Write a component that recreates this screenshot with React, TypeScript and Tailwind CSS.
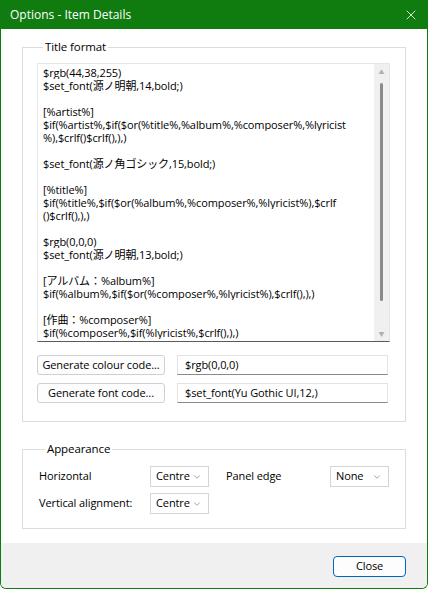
import { X, ChevronDown } from 'lucide-react';

const FONT = '[font-family:"Open_Sans","Noto_Sans_CJK_JP",sans-serif]';

const scriptLines = [
  '$rgb(44,38,255)',
  '$set_font(源ノ明朝,14,bold;)',
  '',
  '[%artist%]',
  '$if(%artist%,$if($or(%title%,%album%,%composer%,%lyricist',
  '%),$crlf()$crlf(),),)',
  '',
  '$set_font(源ノ角ゴシック,15,bold;)',
  '',
  '[%title%]',
  '$if(%title%,$if($or(%album%,%composer%,%lyricist%),$crlf',
  '()$crlf(),),)',
  '',
  '$rgb(0,0,0)',
  '$set_font(源ノ明朝,13,bold;)',
  '',
  '[アルバム：%album%]',
  '$if(%album%,$if($or(%composer%,%lyricist%),$crlf(),),)',
  '',
  '[作曲：%composer%]',
  '$if(%composer%,$if(%lyricist%,$crlf(),),)',
];

function Select({ value }: { value: string }) {
  return (
    <div className="w-[59px] h-[21px] border border-[#d5d5d5] bg-white flex items-center justify-between pl-[5px] pr-[6px]">
      <span>{value}</span>
      <ChevronDown className="w-[10px] h-[10px] text-[#6b6b6b]" strokeWidth={1.5} />
    </div>
  );
}

function ActionRow({ label, value }: { label: string; value: string }) {
  return (
    <div className="flex items-center gap-[12px] h-[20px]">
      <button className="w-[128px] h-[20px] bg-[#fdfdfd] border border-[#d0d0d0] rounded-[3px] flex items-center justify-center whitespace-nowrap">
        {label}
      </button>
      <div className="w-[211px] h-[20px] border border-[#e3e3e3] border-b-[#8a8a8a] bg-white flex items-center pl-[7px]">
        {value}
      </div>
    </div>
  );
}

export default function App() {
  return (
    <div className={`w-[428px] h-[589px] flex flex-col border border-t-0 border-[#107c10] rounded-b-[6px] overflow-hidden text-[11px] tracking-[-0.1px] text-black ${FONT}`}>
      {/* Title bar */}
      <div className="h-[29px] shrink-0 bg-[#107c10] flex items-center justify-between pl-[9px] pr-[8px] text-white">
        <span className="text-[12px] tracking-normal">Options - Item Details</span>
        <X className="w-[16px] h-[16px]" strokeWidth={1.25} />
      </div>

      {/* Body */}
      <div className="flex-1 bg-white px-[21px] pt-[10px]">
        <fieldset className="border border-[#dcdcdc] px-[14px] pb-[18px]">
          <legend className="ml-[6px] px-[2px] leading-[16px] text-[11.5px]">Title format</legend>
          <div className="mt-[8px] w-[353px] h-[279px] border border-[#e6e6e6] border-b-[#5a5a5a] flex">
            <div className="flex-1 pl-[5px] pt-[2px] overflow-hidden">
              {scriptLines.map((line, i) => (
                <div key={i} className="h-[13px] leading-[13px] whitespace-pre overflow-hidden">
                  {line}
                </div>
              ))}
            </div>
            <div className="w-[15px] bg-[#f0f0f0] flex flex-col items-center pt-[5px] pb-[4px]">
              <div className="text-[6px] leading-[6px] text-[#b0b0b0]">▲</div>
              <div className="mt-[8px] w-[3px] h-[218px] bg-[#8a8a8a] rounded-full" />
              <div className="mt-auto text-[6px] leading-[6px] text-[#b0b0b0]">▼</div>
            </div>
          </div>
          <div className="mt-[13px] flex flex-col gap-[8px]">
            <ActionRow label="Generate colour code..." value="$rgb(0,0,0)" />
            <ActionRow label="Generate font code..." value="$set_font(Yu Gothic UI,12,)" />
          </div>
        </fieldset>

        <fieldset className="mt-[19px] border border-[#dcdcdc] pl-[16px] pb-[14px]">
          <legend className="ml-[6px] px-[2px] leading-[16px] text-[11.5px]">Appearance</legend>
          <div className="mt-[9px] flex flex-col gap-[6px]">
            <div className="flex items-center">
              <span className="w-[111px]">Horizontal</span>
              <Select value="Centre" />
              <span className="w-[104px] ml-[17px]">Panel edge</span>
              <Select value="None" />
            </div>
            <div className="flex items-center">
              <span className="w-[111px]">Vertical alignment:</span>
              <Select value="Centre" />
            </div>
          </div>
        </fieldset>
      </div>

      {/* Footer */}
      <div className="h-[45px] shrink-0 bg-[#f0f0f0] flex items-start justify-end pt-[13px] pr-[21px]">
        <button className="w-[73px] h-[21px] bg-[#fdfdfd] border border-[#0067c0] rounded-[4px] flex items-center justify-center">
          Close
        </button>
      </div>
    </div>
  );
}
